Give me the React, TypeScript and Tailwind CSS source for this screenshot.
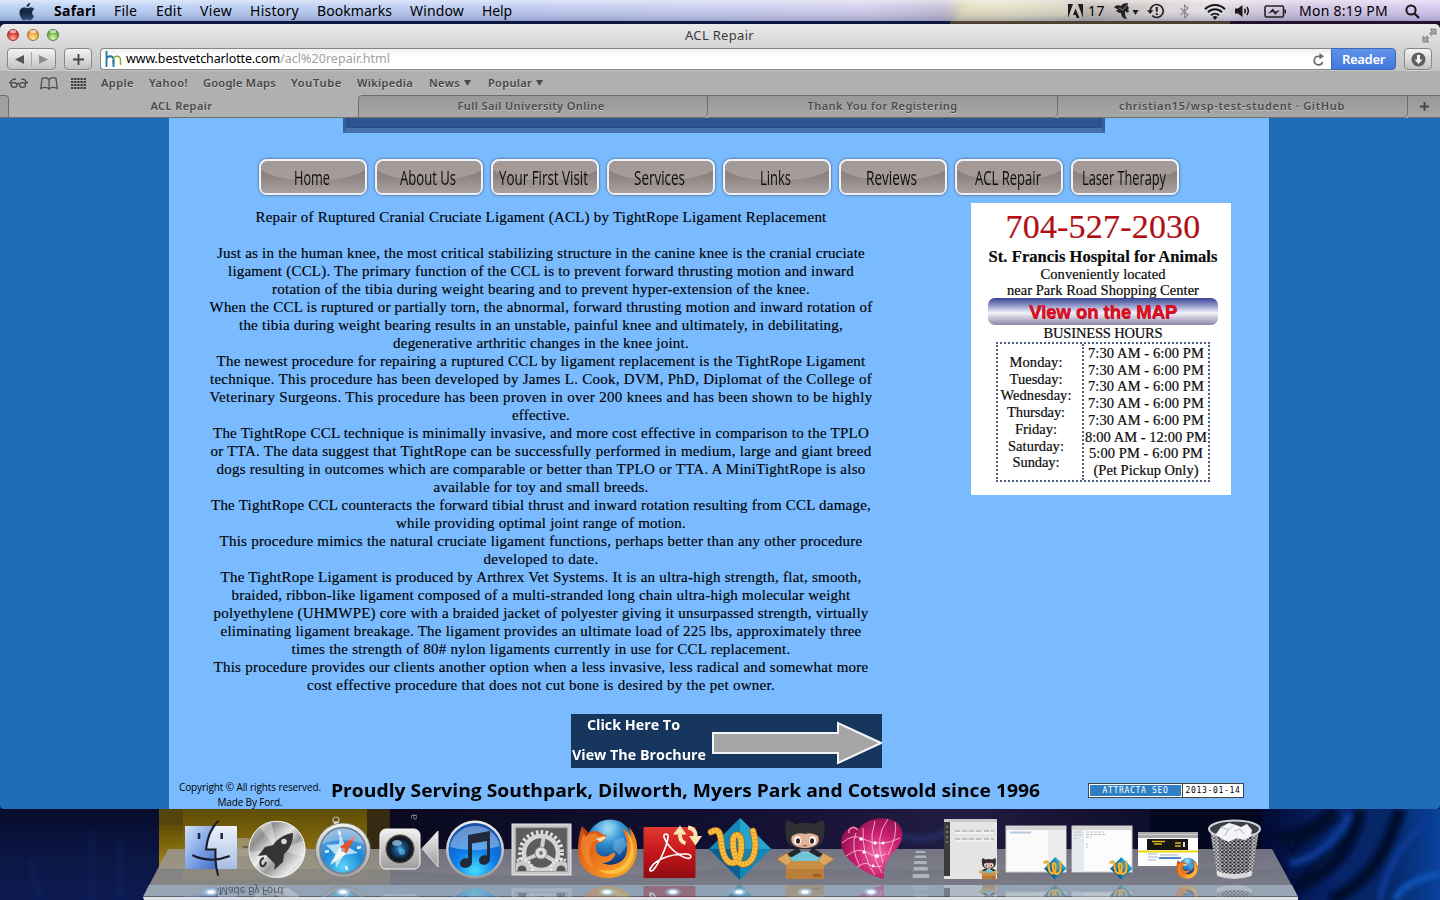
import React, { useLayoutEffect, useRef } from "react";

const UI = "font-['Noto_Sans','Liberation_Sans',sans-serif]";

/* A single line of text set to an exact measure, by tracking or by horizontal scaling. */
function Fit({ w, children, className = "", mode = "track" }: { w: number; children: string; className?: string; mode?: "track" | "scale" }) {
  const ref = useRef<HTMLSpanElement>(null);
  useLayoutEffect(() => {
    const el = ref.current;
    if (!el) return;
    el.style.letterSpacing = "";
    el.style.transform = "";
    const natural = el.getBoundingClientRect().width;
    if (mode === "scale") el.style.transform = `scaleX(${w / natural})`;
    else el.style.letterSpacing = `${(w - natural) / Math.max(1, children.length)}px`;
  }, [w, children, mode]);
  return (
    <span className={`block shrink-0 whitespace-nowrap ${className}`} style={{ width: w }}>
      <span ref={ref} className="inline-block origin-left">{children}</span>
    </span>
  );
}

/* ---------- menu bar ---------- */

function MenuBar() {
  return (
    <header className={`relative flex h-6 w-full items-start bg-[#0b1740] text-[14px] leading-[22px] text-black ${UI}`}>
      <svg className="absolute inset-0 h-6 w-full" viewBox="0 0 1440 24" preserveAspectRatio="none">
        <defs>
          <linearGradient id="mbh" x1="0" x2="1" y1="0" y2="0">
            <stop offset="0" stopColor="#aecbf3" />
            <stop offset=".35" stopColor="#b5c4ee" />
            <stop offset=".5" stopColor="#c3c8ee" />
            <stop offset=".6" stopColor="#cdc8ea" />
            <stop offset=".655" stopColor="#bdb5d0" />
            <stop offset=".67" stopColor="#d9d3ae" />
            <stop offset=".7" stopColor="#d6cfb5" />
            <stop offset=".75" stopColor="#b6afa8" />
            <stop offset=".8" stopColor="#c9c2c0" />
            <stop offset=".84" stopColor="#dcd6dc" />
            <stop offset=".9" stopColor="#cbbcdc" />
            <stop offset="1" stopColor="#d3c2ec" />
          </linearGradient>
          <linearGradient id="mbv" x1="0" x2="0" y1="0" y2="1">
            <stop offset="0" stopColor="#fff" stopOpacity=".55" />
            <stop offset=".35" stopColor="#fff" stopOpacity=".15" />
            <stop offset="1" stopColor="#46507c" stopOpacity=".3" />
          </linearGradient>
          <filter id="haze"><feGaussianBlur stdDeviation="2" /></filter>
        </defs>
        <rect x="950" y="20" width="280" height="4" fill="#4b4030" />
        <rect x="1230" y="20" width="210" height="4" fill="#21102c" />
        <rect width="1440" height="21" fill="url(#mbh)" />
        <path d="M956 20C962 8 968 3 980 1h80c14 4 24 12 22 17z" fill="#efe9c8" opacity=".5" filter="url(#haze)" />
        <path d="M1120 19c30-14 80-16 110-6l10 6z" fill="#fff" opacity=".3" filter="url(#haze)" />
        <rect width="1440" height="21" fill="url(#mbv)" />
        <rect y="21" width="950" height="3" fill="#0b1740" />
      </svg>
      <div className="relative flex h-[22px] w-full items-center">
        <svg className="ml-[19px] mr-[19px] h-[19px] w-4" viewBox="0 0 16 19">
          <defs><linearGradient id="apl" x1="0" x2="0" y1="0" y2="1"><stop offset="0" stopColor="#2d4566" /><stop offset=".5" stopColor="#13233e" /><stop offset="1" stopColor="#31517c" /></linearGradient></defs>
          <path fill="url(#apl)" d="M11.3.8c.1 1.200-.4 2.200-1 3-.7.8-1.700 1.300-2.700 1.200-.1-1.100.4-2.200 1-2.900C9.300 1.400 10.400.9 11.300.8zM14.900 14c-.4 1-.7 1.500-1.200 2.300-.8 1.200-1.700 2.200-2.900 2.200-1.100 0-1.400-.7-2.800-.7s-1.800.7-2.900.7c-1.200 0-2.100-1.100-2.900-2.300C.3 13.300-.1 9.500 1.300 7.500 2.200 6 3.700 5.200 5.100 5.200s2.300.8 3.400.8c1.100 0 1.800-.8 3.400-.8 1.200 0 2.500.7 3.400 1.800-3 1.700-2.500 5.900-.4 7z" />
        </svg>
        <Fit w={42} className="font-bold">Safari</Fit>
        <Fit w={23} className="ml-[18px]">File</Fit>
        <Fit w={26} className="ml-[19px]">Edit</Fit>
        <Fit w={32} className="ml-[18px]">View</Fit>
        <Fit w={49} className="ml-[18px]">History</Fit>
        <Fit w={75} className="ml-[18px]">Bookmarks</Fit>
        <Fit w={54} className="ml-[18px]">Window</Fit>
        <Fit w={30} className="ml-[18px]">Help</Fit>
        <svg className="ml-auto h-[14px] w-[15px]" viewBox="0 0 15 14"><path d="M0 0h5L0 14zM15 0h-5l5 14zM7.500 4.500L11.500 14H8.700L7.600 11H5z" fill="#1d1a1c" /></svg>
        <Fit w={17} className="ml-[5px]">17</Fit>
        <svg className="ml-[9px] h-4 w-[26px]" viewBox="0 0 26 16">
          <path d="M0 4c2-2 5-2 7-1 1-2 3-3 7-3-1 2 0 4 1 5-1 1-1 2 0 4-2 1-3 0-4-1 0 3 0 5 2 8-4 0-6-3-6-6-3 0-4-1-5-3 1 0 2 0 2-1-2 0-3-1-4-2z" fill="#222326" />
          <path d="M5 5l4 2 4-5" stroke="#8d8a8a" fill="none" strokeWidth=".9" />
          <path d="M18.500 7h6l-3 5z" fill="#1d1a1c" />
        </svg>
        <svg className="ml-[7px] h-4 w-[19px]" viewBox="0 0 19 16" fill="none" stroke="#232023" strokeWidth="1.700">
          <path d="M3.200 8a6.500 6.500 0 1 1 2 4.700" /><path d="M0 7.200h6.400L3.200 11z" fill="#232023" stroke="none" /><path d="M9.800 4v4.700M9.800 10.300v1.700" strokeWidth="2" />
        </svg>
        <svg className="ml-[13px] h-[15px] w-[11px]" viewBox="0 0 11 15" fill="none" stroke="#8c868c" strokeWidth="1.200"><path d="M1.500 4l7.500 7-3.500 3V1L9 4l-7.500 7" /></svg>
        <svg className="ml-[14px] h-[17px] w-[22px]" viewBox="0 0 22 17" fill="none" stroke="#171518" strokeWidth="2"><path d="M1 6.200a14 14 0 0 1 20 0M4 9.200a10 10 0 0 1 14 0M7 12.200a6 6 0 0 1 8 0" /><path d="M8.500 14l2.500 3 2.500-3a4 4 0 0 0-5 0z" fill="#171518" stroke="none" /></svg>
        <svg className="ml-[9px] h-[14px] w-4" viewBox="0 0 16 14"><path d="M0 4.500h3L7.500 1v12L3 9.500H0z" fill="#1b181b" /><path d="M9.500 4.800q1.600 2.200 0 4.400M11.800 3q3 4 0 8" fill="none" stroke="#1b181b" strokeWidth="1.500" /></svg>
        <svg className="ml-[13px] h-[13px] w-[23px]" viewBox="0 0 23 13"><rect x="1" y="1" width="18.500" height="11" rx="1.500" fill="none" stroke="#252127" strokeWidth="1.600" /><path d="M20.500 4.500h1.500v4h-1.500z" fill="#252127" /><path d="M4 8.500l5-5 2 3 5-1.500-5 4.800-2-3z" fill="#252127" /></svg>
        <Fit w={89} className="ml-[12px]">Mon 8:19 PM</Fit>
        <svg className="ml-[17px] mr-[20px] h-[15px] w-[15px]" viewBox="0 0 15 15" fill="none" stroke="#1c191d" strokeWidth="2"><circle cx="6" cy="6" r="4.600" /><path d="M9.500 9.500l4.500 4.500" strokeWidth="2.400" /></svg>
      </div>
    </header>
  );
}

/* ---------- browser chrome ---------- */

const lights = [
  "bg-[radial-gradient(circle_at_50%_85%,#ffb1a4,#e2443f_50%,#a32a2a)] border-[#8f3734]",
  "bg-[radial-gradient(circle_at_50%_85%,#ffe9a2,#eda73f_55%,#b3741f)] border-[#9b7038]",
  "bg-[radial-gradient(circle_at_50%_85%,#dcffb8,#7dbb52_55%,#4d8d34)] border-[#557f42]",
];

const btn = "flex h-[22px] items-center justify-center rounded-[4px] border border-[#868686] bg-linear-to-b from-[#f4f4f4] to-[#c2c2c2] shadow-[0_1px_0_#d8d8d8]";

function Chrome() {
  return (
    <div className={`flex flex-col bg-linear-to-b from-[#e9e9e9] via-[#c2c2c2] via-50% to-[#ababab] ${UI}`}>
      <div className="flex h-[23px] items-center">
        <div className="flex w-[700px] shrink-0 items-center gap-2 pl-[7px] pb-px">
          {lights.map((c) => (
            <span key={c} className={`relative size-3 rounded-full border ${c}`}>
              <i className="absolute left-[2px] top-0 h-[3px] w-[6px] rounded-full bg-white/60" />
            </span>
          ))}
        </div>
        <Fit w={69} className="-ml-[15px] pb-[2px] text-[13px] leading-[20px] text-[#3a3a3a]">ACL Repair</Fit>
        <svg className="ml-auto mr-[3px] h-[15px] w-[15px]" viewBox="0 0 15 15" fill="#a4a4a4" stroke="#808080" strokeWidth=".9"><path d="M8 1h6v6l-2-2-2.500 2.500L7.500 5.500 10 3zM1 14V8l2 2 2-2 2 2-2 2 2 2z" /></svg>
      </div>
      <div className="flex h-6 items-center">
        <div className={`${btn} ml-[7px] w-[49px]`}>
          <span className="flex w-6 justify-center"><svg className="h-[9px] w-[9px]" viewBox="0 0 9 9"><path d="M9 0v9L0 4.500z" fill="#555" /></svg></span>
          <span className="h-[15px] w-px bg-[#a9a9a9]" />
          <span className="flex w-6 justify-center"><svg className="h-[9px] w-[9px]" viewBox="0 0 9 9"><path d="M0 0v9L9 4.500z" fill="#8d8d8d" /></svg></span>
        </div>
        <div className={`${btn} ml-2 w-7`}><svg className="h-[11px] w-[11px]" viewBox="0 0 11 11"><path d="M5.500 0v11M0 5.500h11" stroke="#444" strokeWidth="1.800" /></svg></div>
        <div className="ml-2 flex h-[22px] w-[1231px] items-center rounded-l-[4px] border border-r-0 border-[#858585] bg-linear-to-b from-[#f1f1f1] to-white to-40%">
          <svg className="ml-1 h-[17px] w-[17px]" viewBox="0 0 17 17" fill="none"><path d="M1.500 0v16M1.500 9c0-5 7-5 7 0v4" stroke="#2077a4" strokeWidth="1.800" /><path d="M8.500 16V9c0-5 7-5 7 0v5" stroke="#8aa83c" strokeWidth="1.500" /><path d="M8.500 9v7" stroke="#2077a4" strokeWidth="1.600" /></svg>
          <Fit w={154} className="ml-1 text-[12.500px] leading-[20px] text-black">www.bestvetcharlotte.com</Fit>
          <Fit w={110} className="text-[12.500px] leading-[20px] text-[#a0a0a0]">/acl%20repair.html</Fit>
          <svg className="ml-auto mr-[6px] h-[13px] w-3" viewBox="0 0 12 13" fill="none"><path d="M9.600 9A4.300 4.300 0 1 1 6 3.300h2" stroke="#6b6b6b" strokeWidth="1.700" /><path d="M6.500 0l4.500 3.300-4.500 3.200z" fill="#6b6b6b" /></svg>
        </div>
        <div className="flex h-[22px] w-[65px] items-center justify-center rounded-r-[4px] border border-[#3f67b8] bg-linear-to-b from-[#5f93ea] to-[#4277de]">
          <Fit w={43} className="text-[13px] font-semibold leading-[20px] text-white">Reader</Fit>
        </div>
        <div className={`${btn} ml-[8px] w-7`}><svg className="h-[15px] w-[15px]" viewBox="0 0 15 15"><circle cx="7.500" cy="7.500" r="7" fill="#606060" /><path d="M6 3h3v4.500h2.500l-4 4.500-4-4.500H6z" fill="#f4f4f4" /></svg></div>
      </div>
      <div className="flex h-6 items-center bg-[#b0b0b0] text-[11px] font-semibold leading-[18px] text-[#454545] [text-shadow:0_1px_0_#cfcfcf]">
        <svg className="ml-[9px] h-[10px] w-[19px]" viewBox="0 0 19 10" fill="none" stroke="#484848" strokeWidth="1.300"><ellipse cx="5" cy="7" rx="3" ry="2.300" /><ellipse cx="13.500" cy="7" rx="3" ry="2.300" /><path d="M8 6q1.300-1 2.600 0M2 6C1 3 3 1 7 1M16.500 6C18 3 16 1 12.500 1M0 4.500h2M17 4.500h2" /></svg>
        <svg className="ml-3 h-[13px] w-[18px]" viewBox="0 0 18 13" fill="none" stroke="#505050" strokeWidth="1.300"><path d="M9 2.500C7 .5 4 .5 2 1.500L.8 11.500C4 10 7 10 9 12c2-2 5-2 8.200-.5L16 1.500c-2-1-5-1-7 1zM9 2.500V12" /></svg>
        <svg className="ml-[13px] h-[11px] w-[15px]" viewBox="0 0 15 11"><path d="M0 1h15M0 4h15M0 7h15M0 10h15" stroke="#3c3c3c" strokeWidth="2" strokeDasharray="2.300 .85" /></svg>
        <Fit w={33} className="ml-[15px]">Apple</Fit>
        <Fit w={39} className="ml-[15px]">Yahoo!</Fit>
        <Fit w={73} className="ml-[15px]">Google Maps</Fit>
        <Fit w={51} className="ml-[15px]">YouTube</Fit>
        <Fit w={56} className="ml-[15px]">Wikipedia</Fit>
        <Fit w={31} className="ml-[16px]">News</Fit>
        <svg className="ml-1 mb-px h-[6px] w-[7px]" viewBox="0 0 7 6"><path d="M0 0h7L3.500 6z" fill="#4a4a4a" /></svg>
        <Fit w={44} className="ml-[17px]">Popular</Fit>
        <svg className="ml-1 mb-px h-[6px] w-[7px]" viewBox="0 0 7 6"><path d="M0 0h7L3.500 6z" fill="#4a4a4a" /></svg>
      </div>
      <div className="flex h-[23px] text-[11px] font-semibold leading-[19px] text-[#4a4a4a] [text-shadow:0_1px_0_#c8c8c8]">
        <div className="h-full w-[9px] rounded-tr-[4px] border border-l-0 border-[#6e6e6e] bg-[#a0a0a0]" />
        <div className="flex w-[349px] justify-center border-b border-[#707070] bg-[#b0b0b0] pt-px pr-1"><Fit w={62}>ACL Repair</Fit></div>
        <div className="flex w-[350px] justify-center rounded-tl-[4px] rounded-br-[5px] border border-[#6e6e6e] bg-linear-to-b from-[#989898] to-[#a7a7a7] pr-1"><Fit w={147}>Full Sail University Online</Fit></div>
        <div className="flex w-[350px] justify-center rounded-br-[5px] border border-l-0 border-[#6e6e6e] bg-linear-to-b from-[#989898] to-[#a7a7a7]"><Fit w={150}>Thank You for Registering</Fit></div>
        <div className="flex w-[350px] justify-center rounded-br-[5px] border border-l-0 border-[#6e6e6e] bg-linear-to-b from-[#989898] to-[#a7a7a7] pr-px"><Fit w={226}>christian15/wsp-test-student · GitHub</Fit></div>
        <div className="flex flex-1 items-center justify-center border-y border-[#6e6e6e] bg-linear-to-b from-[#989898] to-[#a7a7a7]"><svg className="h-[9px] w-[9px]" viewBox="0 0 9 9"><path d="M4.500 0v9M0 4.500h9" stroke="#444" strokeWidth="1.800" /></svg></div>
      </div>
    </div>
  );
}

/* ---------- web page ---------- */

const nav: [string, number][] = [
  ["Home", 36], ["About Us", 56], ["Your First Visit", 89], ["Services", 51],
  ["Links", 31], ["Reviews", 51], ["ACL Repair", 66], ["Laser Therapy", 84],
];

const lines: [string, number][] = [
  ["Just as in the human knee, the most critical stabilizing structure in the canine knee is the cranial cruciate", 648],
  ["ligament (CCL). The primary function of the CCL is to prevent forward thrusting motion and inward", 626],
  ["rotation of the tibia during weight bearing and to prevent hyper-extension of the knee.", 538],
  ["When the CCL is ruptured or partially torn, the abnormal, forward thrusting motion and inward rotation of", 663],
  ["the tibia during weight bearing results in an unstable, painful knee and ultimately, in debilitating,", 604],
  ["degenerative arthritic changes in the knee joint.", 296],
  ["The newest procedure for repairing a ruptured CCL by ligament replacement is the TightRope Ligament", 649],
  ["technique. This procedure has been developed by James L. Cook, DVM, PhD, Diplomat of the College of", 662],
  ["Veterinary Surgeons. This procedure has been proven in over 200 knees and has been shown to be highly", 663],
  ["effective.", 58],
  ["The TightRope CCL technique is minimally invasive, and more cost effective in comparison to the TPLO", 656],
  ["or TTA. The data suggest that TightRope can be successfully performed in medium, large and giant breed", 661],
  ["dogs resulting in outcomes which are comparable or better than TPLO or TTA. A MiniTightRope is also", 649],
  ["available for toy and small breeds.", 215],
  ["The TightRope CCL counteracts the forward tibial thrust and inward rotation resulting from CCL damage,", 660],
  ["while providing optimal joint range of motion.", 290],
  ["This procedure mimics the natural cruciate ligament functions, perhaps better than any other procedure", 643],
  ["developed to date.", 115],
  ["The TightRope Ligament is produced by Arthrex Vet Systems. It is an ultra-high strength, flat, smooth,", 641],
  ["braided, ribbon-like ligament composed of a multi-stranded long chain ultra-high molecular weight", 619],
  ["polyethylene (UHMWPE) core with a braided jacket of polyester giving it unsurpassed strength, virtually", 655],
  ["eliminating ligament breakage. The ligament provides an ultimate load of 225 lbs, approximately three", 641],
  ["times the strength of 80# nylon ligaments currently in use for CCL replacement.", 499],
  ["This procedure provides our clients another option when a less invasive, less radical and somewhat more", 655],
  ["cost effective procedure that does not cut bone is desired by the pet owner.", 468],
];

const days: [string, number][] = [["Monday:", 53], ["Tuesday:", 53], ["Wednesday:", 71], ["Thursday:", 58], ["Friday:", 42], ["Saturday:", 56], ["Sunday:", 47]];
const hours: [string, number][] = [
  ["7:30 AM - 6:00 PM", 116], ["7:30 AM - 6:00 PM", 116], ["7:30 AM - 6:00 PM", 116], ["7:30 AM - 6:00 PM", 116],
  ["7:30 AM - 6:00 PM", 116], ["8:00 AM - 12:00 PM", 122], ["5:00 PM - 6:00 PM", 114], ["(Pet Pickup Only)", 105],
];

function HoursCard() {
  return (
    <aside className="mt-2 flex h-[292px] w-[260px] flex-col items-center bg-white pl-1 font-['Liberation_Serif',serif] text-[14.500px] text-[#0a0a0a] [-webkit-text-stroke:0.2px]">
      <Fit w={195} className="mt-1 text-[34px] leading-[40px] text-[#b20f14]">704-527-2030</Fit>
      <Fit w={229} className="text-[16.500px] font-bold leading-[19px]">St. Francis Hospital for Animals</Fit>
      <Fit w={125} className="leading-[16px]">Conveniently located</Fit>
      <Fit w={192} className="leading-[16px]">near Park Road Shopping Center</Fit>
      <div className="flex h-[27px] w-[230px] items-center justify-center rounded-[7px] bg-linear-to-b from-[#3c3f92] via-[#f4f4fb] via-55% to-[#8e86a3]">
        <Fit w={148} className="font-['Liberation_Sans',sans-serif] text-[18.500px] font-bold leading-[26px] text-[#dc0f22] [text-shadow:0.500px_0.500px_0_#b01030]">View on the MAP</Fit>
      </div>
      <Fit w={119} className="leading-[17px]">BUSINESS HOURS</Fit>
      <div className="flex h-[140px] w-[214px] border-2 border-dotted border-[#4d5f7a] leading-[16.700px]">
        <div className="flex w-[86px] flex-col items-center border-r-2 border-dotted border-[#4d5f7a] pt-[10px] pr-2">
          {days.map(([d, w]) => <Fit key={d} w={w}>{d}</Fit>)}
        </div>
        <div className="flex w-[124px] flex-col items-center pt-px">
          {hours.map(([h, w], i) => <Fit key={i} w={w}>{h}</Fit>)}
        </div>
      </div>
    </aside>
  );
}

function WebPage() {
  return (
    <main className="flex h-[691px] justify-center overflow-hidden rounded-b-[4px] bg-[#1f6bb6] pr-0.5">
      <div className="flex w-[1100px] flex-col bg-[#7abbff]">
        <div className="ml-[174px] h-[15px] w-[762px] border-x-[3px] border-b-[5px] border-x-[#365f9a] border-b-[#4570ab] bg-[#2d5690]">
          <div className="mx-[2px] h-[10px] border border-t-0 border-[#274b82]" />
        </div>
        <nav className="ml-[90px] mt-[26px] flex gap-2">
          {nav.map(([label, w]) => (
            <a key={label} className="relative flex h-9 w-[108px] items-center justify-center rounded-[8px] border-2 border-[#eef2fa] bg-linear-to-b from-[#a29896] to-[#aba19f] shadow-[0_0_2px_1px_#5f83aa]">
              <svg className="absolute inset-0 h-8 w-[104px]" viewBox="0 0 104 32">
                <defs><linearGradient id="gloss" x1="0" x2="0" y1="0" y2="1"><stop offset="0" stopColor="#8a7f7d" /><stop offset=".3" stopColor="#8f8583" /><stop offset="1" stopColor="#aba19f" /></linearGradient></defs>
                <path d="M0 9C20 23 84 23 104 9v18q0 5-5 5H5q-5 0-5-5z" fill="url(#gloss)" />
              </svg>
              <Fit w={w} mode="scale" className="relative -ml-[3px] pt-[2px] font-['Open_Sans','Noto_Sans',sans-serif] text-[19.500px] leading-[30px] text-[#0c0c0c]">{label}</Fit>
            </a>
          ))}
        </nav>
        <div className="flex h-[519px]">
          <article className="ml-8 mr-[90px] mt-[13px] flex w-[680px] flex-col items-center font-['Liberation_Serif',serif] text-[15px] leading-[18px] text-black [-webkit-text-stroke:0.150px]">
            <Fit w={571} className="mb-[18px]">Repair of Ruptured Cranial Cruciate Ligament (ACL) by TightRope Ligament Replacement</Fit>
            {lines.map(([t, w]) => <Fit key={t} w={w}>{t}</Fit>)}
          </article>
          <HoursCard />
        </div>
        <a className="ml-[402px] flex h-[54px] w-[311px] bg-[#17365d] font-['Open_Sans','Noto_Sans',sans-serif] text-[15px] font-bold leading-[22px] text-white">
          <span className="flex w-[141px] flex-col justify-between pb-[3px]">
            <Fit w={93} mode="scale" className="-mt-px ml-[16px]">Click Here To</Fit>
            <Fit w={134} mode="scale" className="ml-px">View The Brochure</Fit>
          </span>
          <svg className="h-[54px] w-[170px]" viewBox="0 0 170 54"><path d="M1 19h125V9l43 20-43 20V39H1z" fill="#a5a5a5" stroke="#f3f5f8" strokeWidth="2" /></svg>
        </a>
        <footer className="flex h-[41px] font-['Open_Sans','Noto_Sans',sans-serif] text-black">
          <div className="ml-[10px] flex w-[142px] flex-col items-center pt-3 text-[10px] leading-[15px]">
            <Fit w={142}>Copyright © All rights reserved.</Fit>
            <Fit w={65}>Made By Ford.</Fit>
          </div>
          <Fit w={709} mode="scale" className="ml-[10px] pt-[11px] text-[17px] font-bold leading-[24px]">Proudly Serving Southpark, Dilworth, Myers Park and Cotswold since 1996</Fit>
          <div className="ml-[48px] mt-[15px] flex h-[15px] w-[156px] border border-[#444] bg-white font-['DejaVu_Sans_Mono',monospace] text-[8px] leading-[13px]">
            <span className="flex w-[93px] justify-center border border-white bg-[#2f7fc4] leading-[12px] text-white"><Fit w={66}>ATTRACTA SEO</Fit></span>
            <span className="flex flex-1 justify-center border-l border-[#444] text-black"><Fit w={55}>2013-01-14</Fit></span>
          </div>
        </footer>
      </div>
    </main>
  );
}

/* ---------- dock ---------- */

function Defs() {
  return (
    <svg className="absolute size-0">
      <defs>
        <linearGradient id="fL" x1="0" x2="1" y1="0" y2="1"><stop offset="0" stopColor="#d2e2f8" /><stop offset=".5" stopColor="#83a6e6" /><stop offset="1" stopColor="#3f6cc6" /></linearGradient>
        <linearGradient id="fR" x1="0" x2="0" y1="0" y2="1"><stop offset="0" stopColor="#eef2fa" /><stop offset="1" stopColor="#a6bfe6" /></linearGradient>
        <linearGradient id="steel" x1="0" x2="1" y1="0" y2="1"><stop offset="0" stopColor="#d8d8d8" /><stop offset=".25" stopColor="#8f8f8f" /><stop offset=".45" stopColor="#e6e6e6" /><stop offset=".6" stopColor="#9a9a9a" /><stop offset=".8" stopColor="#e9e9e9" /><stop offset="1" stopColor="#a4a4a4" /></linearGradient>
        <linearGradient id="silver" x1="0" x2="0" y1="0" y2="1"><stop offset="0" stopColor="#f2f2f2" /><stop offset="1" stopColor="#9c9c9c" /></linearGradient>
        <radialGradient id="sea" cx=".5" cy=".85" r=".8"><stop offset="0" stopColor="#5ad3fa" /><stop offset=".55" stopColor="#1d87d6" /><stop offset="1" stopColor="#74a9dc" /></radialGradient>
        <radialGradient id="lens"><stop offset="0" stopColor="#55b2e4" /><stop offset=".35" stopColor="#1c5a8c" /><stop offset=".7" stopColor="#123456" /><stop offset="1" stopColor="#07121e" /></radialGradient>
        <radialGradient id="tunes" cx=".5" cy=".9" r=".9"><stop offset="0" stopColor="#48dcff" /><stop offset=".45" stopColor="#0c7cea" /><stop offset="1" stopColor="#1a4fa8" /></radialGradient>
        <linearGradient id="fox" x1="0" x2="1" y1="0" y2="1"><stop offset="0" stopColor="#c9430f" /><stop offset=".5" stopColor="#ee7a1c" /><stop offset="1" stopColor="#fbb42e" /></linearGradient>
        <radialGradient id="globe" cx=".45" cy=".2" r=".8"><stop offset="0" stopColor="#a8e2f8" /><stop offset=".4" stopColor="#2e8fd2" /><stop offset="1" stopColor="#0d2c74" /></radialGradient>
        <linearGradient id="red" x1="0" x2="0" y1="0" y2="1"><stop offset="0" stopColor="#e03a32" /><stop offset=".5" stopColor="#c4161c" /><stop offset="1" stopColor="#8f0c10" /></linearGradient>
        <radialGradient id="pink" cx=".6" cy=".6" r=".7"><stop offset="0" stopColor="#f46aa8" /><stop offset=".5" stopColor="#c9206f" /><stop offset="1" stopColor="#8c0e4a" /></radialGradient>
        <radialGradient id="spark"><stop offset="0" stopColor="#fff" /><stop offset=".35" stopColor="#c8ecff" stopOpacity=".9" /><stop offset="1" stopColor="#8fd0ff" stopOpacity="0" /></radialGradient>
        <pattern id="mesh" width="4" height="3.500" patternUnits="userSpaceOnUse"><rect width="4" height="3.500" fill="#b4b4b8" /><ellipse cx="1.300" cy="1" rx="1.400" ry=".9" fill="#1d1d20" /><ellipse cx="3.300" cy="2.700" rx="1.300" ry=".8" fill="#2c2c30" /></pattern>
        <clipPath id="strip"><rect x="0" y="76" width="66" height="12" /></clipPath>
      </defs>
    </svg>
  );
}

const Finder = () => (
  <g>
    <rect x="7" y="17" width="52" height="43" rx="1" fill="url(#fR)" />
    <path d="M8 17h30c-5 6-8 14-9 24h9l1 19H8q-1 0-1-1V18q0-1 1-1z" fill="url(#fL)" />
    <path d="M21 24v6M43.700 24v6" stroke="#1d2b49" strokeWidth="2.600" />
    <path d="M15 46.500q18 8 36 .8" fill="none" stroke="#161b28" strokeWidth="2" strokeLinecap="round" />
    <path d="M40 12C33 19 29 30 28 40.500h9.500C37 50 38 59 40 66" fill="none" stroke="#191d27" strokeWidth="2" strokeLinecap="round" />
  </g>
);
const Rocket = () => (
  <g>
    <circle cx="33" cy="40.300" r="28.500" fill="url(#steel)" />
    <path d="M33 40L15 18a28 28 0 0 1 12-6zM33 40l27-8a28 28 0 0 1 0 16zM33 40L10 57a28 28 0 0 1-5-14z" fill="#fff" opacity=".35" />
    <circle cx="33" cy="40.300" r="28" fill="none" stroke="#f1f1f1" strokeWidth="1" />
    <path d="M49 24c-8 1-15 5-20 12l-8 2-7 9 8-1 9 9-1 6 9-8 1-8c6-5 9-12 9-21z" fill="#333436" />
    <path d="M20 49c-4 1-5 6-2 8M17 57q4 1 5-4" fill="none" stroke="#333436" strokeWidth="2" />
    <circle cx="40" cy="32.500" r="2.800" fill="#d5d5d5" />
  </g>
);
const Compass = () => (
  <g>
    <circle cx="26" cy="11" r="3" fill="none" stroke="#b7b7b7" strokeWidth="1.200" /><rect x="24" y="12.500" width="4.500" height="4" fill="#ddd" />
    <circle cx="33" cy="41.500" r="27.500" fill="url(#silver)" stroke="#707070" strokeWidth=".8" />
    <circle cx="33" cy="41.500" r="23" fill="url(#sea)" stroke="#747b83" strokeWidth="1.500" />
    <g stroke="#e9f6ff" strokeWidth="2.500"><path d="M29 22l1 4M15 43l4-1M51 38l-4 1M37 61l-1-4" /></g>
    <path d="M30 25l5 11 13 8-14 2-8 13-1-14-9-9 13-1z" fill="#d8f1fc" opacity=".8" />
    <path d="M30 38L46 26 36 45z" fill="#e8502a" /><path d="M30 38L20 56l16-11z" fill="#f6f6f6" />
    <circle cx="33" cy="41" r="2" fill="#a8a8a8" />
    <path d="M12 35a22 22 0 0 1 42 0q-21-8-42 0z" fill="#fff" opacity=".28" />
  </g>
);
const FaceTime = () => (
  <g>
    <rect x="4" y="20" width="40" height="40" rx="6" fill="url(#silver)" stroke="#f6f6f6" />
    <path d="M46 39.500L62 22v36z" fill="url(#silver)" stroke="#dedede" />
    <circle cx="24" cy="40" r="14.500" fill="#222" stroke="#999" strokeWidth="1" /><circle cx="24" cy="40" r="11.500" fill="url(#lens)" />
    <ellipse cx="21" cy="34" rx="5" ry="3" fill="#bfe6f8" opacity=".6" /><circle cx="26" cy="43" r="3" fill="#65c0ee" opacity=".6" />
  </g>
);
const Tunes = () => (
  <g>
    <circle cx="33" cy="40.500" r="29" fill="url(#silver)" /><circle cx="33" cy="40.500" r="26.500" fill="url(#tunes)" />
    <path d="M8 38a25.500 25.500 0 0 1 50-1q-25 8-50 1z" fill="#fff" opacity=".35" />
    <path d="M26 26l22-4v28c0 7-11 8-11 1.500 0-4 4-6 8-5V32l-15 2.500V53c0 7-12 8-12 1.500 0-4 4-6 8-5z" fill="#202a3b" />
  </g>
);
const Gears = () => (
  <g>
    <rect x="4" y="15" width="59" height="51" fill="#c9c9c9" stroke="#e6e6e6" /><rect x="8" y="19" width="51" height="43" fill="#5c5c5c" stroke="#7b7b7b" />
    <svg x="8" y="19" width="51" height="43" viewBox="8 19 51 43">
      <circle cx="33" cy="44" r="21" fill="none" stroke="#e2e2e2" strokeWidth="4" strokeDasharray="2.600 2.300" />
      <circle cx="33" cy="44" r="17" fill="none" stroke="#d5d5d5" strokeWidth="4.500" />
      <path d="M33 44l3-18M33 44l15 9M33 44l-16 7" stroke="#cfcfcf" strokeWidth="4" />
      <circle cx="33" cy="44" r="6" fill="#ddd" stroke="#888" /><circle cx="33" cy="44" r="2" fill="#777" />
      <circle cx="14" cy="61" r="9" fill="#ccc" /><circle cx="14" cy="61" r="10.500" fill="none" stroke="#e8e8e8" strokeWidth="3" strokeDasharray="2 2" /><circle cx="14" cy="61" r="4.500" fill="#555" />
      <circle cx="53" cy="61" r="9" fill="#ccc" /><circle cx="53" cy="61" r="10.500" fill="none" stroke="#e8e8e8" strokeWidth="3" strokeDasharray="2 2" /><circle cx="53" cy="61" r="4.500" fill="#555" />
    </svg>
  </g>
);
const Fox = () => (
  <g>
    <circle cx="36" cy="34" r="23.500" fill="url(#globe)" />
    <path d="M31 13q8-1 12 4l-5 3-1 6-7-4zM40 32l9-4 4 8-7 10-7-6z" fill="#8fd0ee" opacity=".4" />
    <path d="M8 17c1 3 3 6 5 8 5-4 11-4 17 1 2-1 2-1 2 2-1 5-5 5-8 6-2 2-3 4-2 7 2 6 9 9 15 4 3-2 5-1 4 1-3 6-8 8-13 8 9 4 20 1 24-8 3-9 0-20-4-27 4 2 7 6 9 10 0-5-1-9-3-12 8 8 11 19 8 31-4 15-16 21-28 21C16 69 4 57 4 42c0-9 1-17 4-25z" fill="url(#fox)" />
    <path d="M51 18c8 11 8 28-1 37-7 7-18 8-27 5 16 11 32 3 36-12 2-9-1-19-5-26 2 5 3 9 2 13-1-6-2-12-5-17z" fill="#ffd24f" opacity=".7" />
    <path d="M9 26c-4 12-2 26 11 34-6-10-6-19-1-27l8-4-6-5z" fill="#f7953a" opacity=".6" />
    <path d="M22 30l8-3 2 2-6 4z" fill="#f9dcc0" /><path d="M8 17l4 11 3-4z" fill="#b23c10" />
  </g>
);
const Acrobat = () => (
  <g>
    <rect x="3.500" y="18" width="52" height="51" rx="1" fill="url(#red)" />
    <path d="M10 60c4-8 17-15 36-15 7 0 6 6 0 4-9-3-19-12-22-21-1-4 5-4 4 0-1 10-9 26-14 32-2 3-5 2-4 0z" fill="none" stroke="#fff" strokeWidth="1.700" />
    <path d="M45.500 34.500c-4-1.500-6-5-5.500-10M48 18.500c5 .5 8 4 7.500 9" fill="none" stroke="#fbe6b0" strokeWidth="4" />
    <path d="M33 25.500L40 16.500l6.500 9zM49 27l6.500 9.500L62 27z" fill="#fbe6b0" />
  </g>
);
const rope = "M5 23c7-4 9 0 10 8 1 13 4 23 12 23 8-1 9-13 8-23-1-7-8-7-8 1 0 15 5 25 12 23 9-2 13-16 8-33";
const Wrangler = () => (
  <g>
    <path d="M34 9l31 31-31 31L3 40z" fill="#1387b5" /><path d="M34 9l31 31H34z" fill="#27a3cf" /><path d="M34 71L3 40h31z" fill="#0a5f93" />
    <path d={rope} fill="none" stroke="#a8640c" strokeWidth="6.800" strokeLinecap="round" />
    <path d={rope} fill="none" stroke="#f9bf42" strokeWidth="5.400" strokeLinecap="round" />
    <path d={rope} fill="none" stroke="#d48e20" strokeWidth="4.800" strokeDasharray=".6 3" />
  </g>
);
const Octo = () => (
  <g>
    <path d="M15 44h36l6 8-10 5H19L9 52z" fill="#1f3f52" />
    <ellipse cx="33" cy="49" rx="17" ry="6.500" fill="#7fdcf0" opacity=".85" />
    <path d="M15 11l9 4q9-2.500 18 0l9-4q3 8 1 13c1 10-6 16-19 16s-20-6-19-16q-2-5 1-13z" fill="#303034" />
    <path d="M20 27q6-4 13-2 7-2 13 2c3 7-3 12-13 12s-16-5-13-12z" fill="#deb39a" />
    <ellipse cx="25.500" cy="31.500" rx="3.400" ry="4.300" fill="#fff" /><ellipse cx="40.500" cy="31.500" rx="3.400" ry="4.300" fill="#fff" /><ellipse cx="26" cy="32" rx="2" ry="2.800" fill="#3a221c" /><ellipse cx="40" cy="32" rx="2" ry="2.800" fill="#3a221c" />
    <path d="M31 36.500q2 1 4 0" stroke="#8c4a34" fill="none" />
    <path d="M26 39q-6 2-12 8l6 1 9-5zM40 39q6 2 12 8l-6 1-9-5z" fill="#26262a" />
    <path d="M14 52h38v18H14z" fill="#c98f45" /><path d="M14 60h38v10H14z" fill="#b97e38" />
    <path d="M15 44L5 50l10 7 5-5zM51 44l11 6-10 7-6-5z" fill="#dba75e" stroke="#a8722e" strokeWidth=".6" />
    <path d="M41 65h8v3h-8z" fill="#9a5d2b" />
  </g>
);
const Heart = () => (
  <g>
    <path d="M46 70C30 66 4 52 3 34 3 22 14 14 20 21c4-8 18-14 30-11 12 2 16 12 14 20-4 14-20 18-18 40z" fill="url(#pink)" />
    <path d="M4 34q11-10 21-4 18 9 37-1M8 47q12-9 20-4 10 7 20 2M19 58q8-6 13-2 5 3 12 1M18 24q-6 14 4 34M25 19q-1 30 12 47M37 12q-9 26 7 52M50 10q-14 18-5 44M57 13q3 12-7 33" fill="none" stroke="#ffd3e6" strokeWidth=".9" opacity=".85" />
    <g fill="#fff"><circle cx="23" cy="30" r="1.700" /><circle cx="37" cy="34" r="1.700" /><circle cx="26" cy="43" r="1.600" /><circle cx="39" cy="47" r="2" /><circle cx="45" cy="34" r="1.600" /><circle cx="35" cy="57" r="1.400" /></g>
    <path d="M20 21c-4-5-10-2-9 3" fill="none" stroke="#f17fae" strokeWidth="1.600" />
  </g>
);
const Badge = ({ children }: { children: React.ReactNode }) => <g transform="translate(40 45) scale(.36)">{children}</g>;
const WinPrefs = () => (
  <g><rect x="7" y="10" width="53" height="60" fill="#e4e4e4" /><rect x="7" y="10" width="53" height="3" fill="#c9c9c9" /><rect x="7" y="13" width="6" height="54" fill="#3b3b3d" /><path d="M10 17v20" stroke="#8b8b8b" strokeWidth="1.500" strokeDasharray="2 3" /><path d="M18 22h26M47 22h10M18 30h26M47 30h10" stroke="#b4b4b4" strokeWidth="1.300" strokeDasharray="5 2" /><path d="M18 24h38M18 32h38" stroke="#fff" /><g transform="translate(40 45) scale(.36)"><Octo /></g></g>
);
const WinDoc = () => (
  <g><rect x="3" y="17" width="60" height="46" fill="#fafafa" stroke="#cfcfcf" /><rect x="3" y="17" width="60" height="4" fill="#d4d4d4" /><rect x="7" y="22.500" width="21" height="2" fill="#b5c7dc" /><rect x="45" y="21" width="18" height="42" fill="#ececec" /><Badge><Wrangler /></Badge></g>
);
const WinDoc2 = () => (
  <g><rect x="3" y="17" width="60" height="46" fill="#fcfcfc" stroke="#cfcfcf" /><rect x="3" y="17" width="60" height="4" fill="#d4d4d4" /><rect x="3" y="21" width="12" height="42" fill="#e6ebf2" /><path d="M17 23h18M17 25.500h20M17 28h6M5 23h7M5 26h9M5 29h5M17 35h2M17 38h2" stroke="#a3a9b0" strokeWidth=".8" strokeDasharray="3 1" /><Badge><Wrangler /></Badge></g>
);
const WinSite = () => (
  <g><rect x="3" y="23" width="60" height="34" fill="#fdfdfd" /><rect x="3" y="23" width="60" height="6" fill="#a9a9a9" /><path d="M3 25.500h60" stroke="#d0d0d0" /><rect x="12" y="30" width="41" height="11" fill="#151412" /><path d="M17 32.500h13M19 35h8M40 34h6M40 37h6" stroke="#d9b81c" strokeWidth="1.500" /><path d="M49 33v5" stroke="#ddd" strokeWidth="2" /><rect x="3" y="41.500" width="60" height="2" fill="#f3d613" /><path d="M13 45h9M13 48h10M13 51h8M25 46h18" stroke="#9fb3cc" strokeWidth="1" /><path d="M24 48h22v2H24z" fill="#4b87cf" /><Badge><Fox /></Badge></g>
);
const Trash = () => (
  <g>
    <path d="M9 21l7 45q18 7 35 0l7-45z" fill="url(#mesh)" /><path d="M15.500 62l.8 5q17 6 34 0l1-5q-18 6-35.800 0z" fill="#d9d9dc" />
    <path d="M9 21l7 45q3 1 5 1.500L17 25zM58 21l-7 45-4 1.300L52 24z" fill="#fff" opacity=".25" />
    <ellipse cx="33.500" cy="20" rx="25.500" ry="8.500" fill="#3d3f46" stroke="#d4d4da" strokeWidth="2" />
    <path d="M15 25l5-7 8-4 7 2 5 2 6-3 5 6-1 6-6 4-9-2-7 4-7-3z" fill="#f3f4f7" /><path d="M20 18l7 3 5-4M33 22l6-2 4 5M27 21l-3 6" stroke="#b2b6c0" fill="none" />
  </g>
);
const Separator = () => (
  <g fill="#c2c7d2" opacity=".75"><path d="M12 42h9l.5 2h-10zM11 46.500h11l.5 2.500h-12zM10.500 52h12l.5 3H10zM10 58h13.500l.5 3.500H9zM9 65h16l.5 4H8.500z" /></g>
);

const items: { id: string; w: string; width: number; running?: boolean; art: React.ReactNode }[] = [
  { id: "finder", w: "w-[66px]", width: 66, running: true, art: <Finder /> },
  { id: "rocket", w: "w-[66px]", width: 66, art: <Rocket /> },
  { id: "compass", w: "w-[66px]", width: 66, running: true, art: <Compass /> },
  { id: "facetime", w: "w-[66px]", width: 66, art: <FaceTime /> },
  { id: "tunes", w: "w-[66px]", width: 66, art: <Tunes /> },
  { id: "gears", w: "w-[66px]", width: 66, art: <Gears /> },
  { id: "fox", w: "w-[66px]", width: 66, running: true, art: <Fox /> },
  { id: "acrobat", w: "w-[66px]", width: 66, running: true, art: <Acrobat /> },
  { id: "wrangler", w: "w-[66px]", width: 66, running: true, art: <Wrangler /> },
  { id: "octo", w: "w-[66px]", width: 66, running: true, art: <Octo /> },
  { id: "heart", w: "w-[66px]", width: 66, running: true, art: <Heart /> },
  { id: "sep", w: "w-[33px]", width: 33, art: <Separator /> },
  { id: "prefs", w: "w-[66px]", width: 66, art: <WinPrefs /> },
  { id: "doc1", w: "w-[66px]", width: 66, art: <WinDoc /> },
  { id: "doc2", w: "w-[66px]", width: 66, art: <WinDoc2 /> },
  { id: "site", w: "w-[66px]", width: 66, art: <WinSite /> },
  { id: "trash", w: "w-[66px]", width: 66, art: <Trash /> },
];

function Wallpaper() {
  return (
    <svg className="absolute inset-0 h-[91px] w-full" viewBox="0 0 1440 91">
      <defs>
        <linearGradient id="nv" x1="0" x2="0" y1="0" y2="1"><stop offset="0" stopColor="#060c2c" /><stop offset=".5" stopColor="#0b1642" /><stop offset="1" stopColor="#0d1b52" /></linearGradient>
        <linearGradient id="yl" x1="0" x2="0" y1="0" y2="1"><stop offset="0" stopColor="#5f4d05" /><stop offset=".6" stopColor="#8a7010" /><stop offset="1" stopColor="#b39419" /></linearGradient>
        <linearGradient id="mid" x1="0" x2="1" y1="0" y2="0"><stop offset="0" stopColor="#0a0a20" /><stop offset=".4" stopColor="#121033" /><stop offset=".65" stopColor="#221c42" /><stop offset="1" stopColor="#04061f" /></linearGradient>
        <linearGradient id="rt" x1="0" x2="1" y1="0" y2="0"><stop offset="0" stopColor="#020a30" /><stop offset=".4" stopColor="#062468" /><stop offset=".7" stopColor="#062765" /><stop offset="1" stopColor="#0a429c" /></linearGradient>
        <linearGradient id="shelf" x1="0" x2="0" y1="0" y2="1"><stop offset="0" stopColor="#85858f" stopOpacity=".84" /><stop offset="1" stopColor="#8f9199" stopOpacity=".95" /></linearGradient>
        <linearGradient id="lip" x1="0" x2="1" y1="0" y2="0"><stop offset="0" stopColor="#98a5b4" /><stop offset=".3" stopColor="#8da1b6" /><stop offset="1" stopColor="#98a6b4" /></linearGradient>
        <filter id="soft"><feGaussianBlur stdDeviation="2.500" /></filter>
      </defs>
      <rect width="1440" height="91" fill="url(#nv)" />
      <g filter="url(#soft)" stroke="#173078" strokeWidth="5" opacity=".3"><path d="M92 20v70M120 30v60M30 50l10 40" /></g>
      <rect x="390" width="870" height="91" fill="url(#mid)" />
      <rect x="367" width="23" height="70" fill="#342b12" /><path d="M159 0h24v60h-24z" fill="#54450a" /><path d="M159 16h24v44h-24z" fill="url(#yl)" /><rect x="183" width="184" height="70" fill="url(#yl)" />
      <rect x="1260" width="180" height="91" fill="url(#rt)" />
      <rect x="1150" width="111" height="60" fill="#030720" />
      <g filter="url(#soft)" fill="none">
        <path d="M1275 30q30 0 60-30M1290 80q60-20 70-80M1330 91q50-20 70-91" stroke="#020a2e" strokeWidth="12" />
        <path d="M1290 55q40-10 60-50M1380 91q10-50 50-80" stroke="#0a3a94" strokeWidth="7" />
        <path d="M1395 91q10-20 45-26" stroke="#1153b8" strokeWidth="7" />
        <path d="M1290 40l50-30M1300 70l45-40" stroke="#020822" strokeWidth="6" strokeDasharray="6 3" />
        <path d="M890 20q30 20 60 0" stroke="#2e4a8f" strokeWidth="8" opacity=".35" />
      </g>
      <path d="M168 40h1104l26 48H143z" fill="url(#shelf)" />
      <path d="M168 40h222v36H150z" fill="#b0a684" opacity=".4" />
      <path d="M157 60h211q200 14 350 0h564l9 16H150z" fill="#5c5f6c" opacity=".22" />
      <path d="M149 76h1143l6 12H143z" fill="url(#lip)" />
      <path d="M143 88h1155v3H144z" fill="#dfe3e7" /><path d="M143 87.500h1155" stroke="#5b626c" strokeWidth="1" />
      <rect x="236" y="29" width="14" height="18" rx="2" fill="#a5a28e" opacity=".7" /><path d="M243 38h5" stroke="#333" />
    </svg>
  );
}

function Dock() {
  return (
    <section className="relative h-[91px] overflow-hidden bg-[#0a1440]">
      <Wallpaper />
      <Defs />
      <div className="relative flex pl-[178px]">
        {items.map((it) => (
          <svg key={it.id} className={`h-[91px] shrink-0 overflow-visible ${it.w}`} viewBox={`0 0 ${it.width} 91`}>
            <g clipPath="url(#strip)" opacity=".35"><g transform="translate(0 146) scale(1 -1)">{it.art}</g></g>
            {it.art}
            {it.running && <><ellipse cx="33" cy="83" rx="9" ry="4.500" fill="url(#spark)" /><ellipse cx="33" cy="83" rx="3.500" ry="1.700" fill="#fff" /></>}
          </svg>
        ))}
      </div>
      <span className="absolute left-[219px] top-[75px] -scale-y-100 font-['Open_Sans',sans-serif] text-[10px] leading-[14px] text-[#4b5663]">Made By Ford.</span>
      <span className="absolute left-[410px] top-[1px] -rotate-90 font-['Open_Sans',sans-serif] text-[11px] leading-[14px] text-[#8b8d9c]">a</span>
    </section>
  );
}

export default function App() {
  return (
    <div className="flex h-[900px] w-[1440px] flex-col overflow-hidden bg-[#081238]">
      <MenuBar />
      <div className="flex flex-col overflow-hidden rounded-t-[5px]">
        <Chrome />
        <WebPage />
      </div>
      <Dock />
    </div>
  );
}
